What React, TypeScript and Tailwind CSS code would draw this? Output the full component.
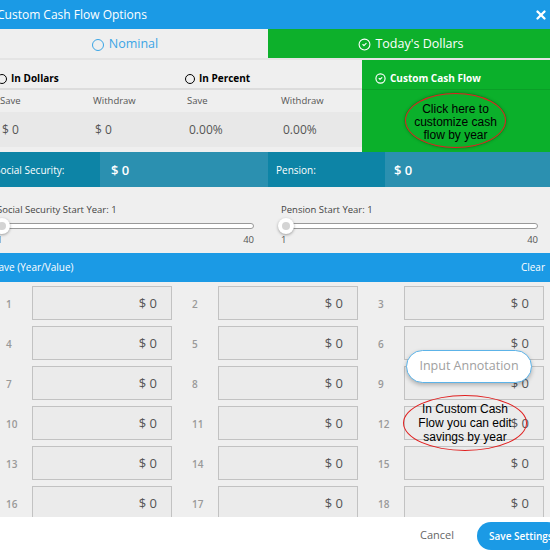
import { CircleCheck, X } from "lucide-react";

const ui = { fontFamily: '"Open Sans", "Noto Sans", sans-serif' };
const arial = { fontFamily: '"Liberation Sans", Arial, sans-serif' };

function Radio() {
	return <span className="inline-block w-[10px] h-[10px] rounded-full border border-black mr-[4px]" />;
}

function Slider({ label }: { label: string }) {
	return (
		<div className="w-[257px]">
			<div className="text-[9.5px] text-[#444] leading-none h-[13px]">{label}</div>
			<div className="relative h-[16px] flex items-center">
				<div className="w-full h-[6px] rounded-full bg-white border border-[#999]" />
				<div className="absolute left-[-3px] top-0 w-[16px] h-[16px] rounded-full bg-white shadow-[0_1px_3px_rgba(0,0,0,0.35)] flex items-center justify-center">
					<div className="w-[8px] h-[8px] rounded-full bg-[#d4d4d4]" />
				</div>
			</div>
			<div className="flex justify-between text-[9.5px] text-[#555] leading-none mt-[1px]">
				<span>1</span>
				<span>40</span>
			</div>
		</div>
	);
}

export default function App() {
	const cells = Array.from({ length: 18 }, (_, i) => i + 1);

	return (
		<div className="w-[550px] h-[550px] overflow-hidden relative bg-white" style={ui}>
			<div className="ml-[-8px] w-[562px] flex flex-col">
				{/* header */}
				<div className="h-[29px] bg-[#1b9ae5] flex items-center justify-between pl-[5px] pr-[6px]">
					<span className="text-white text-[12px]">Custom Cash Flow Options</span>
					<X size={14} strokeWidth={4} className="text-white" />
				</div>

				{/* tabs */}
				<div className="h-[31px] flex border-b-2 border-[#e4e4e4]">
					<div className="w-[276px] bg-[#efefef] flex items-center justify-center text-[12.5px] text-[#3aa5e6] pr-[10px] pt-[2px]">
						<span className="inline-block w-[12px] h-[12px] rounded-full border-[1.5px] border-[#3aa5e6] mr-[5px]" />
						Nominal
					</div>
					<div className="flex-1 bg-[#0db02b] flex items-center justify-center text-[12.5px] text-white pt-[2px]">
						<CircleCheck size={13} strokeWidth={2} className="mr-[4px]" />
						Today's Dollars
					</div>
				</div>

				{/* options */}
				<div className="h-[92px] flex">
					<div className="w-[370px] bg-[#efefef] flex flex-col">
						<div className="h-[30px] grid grid-cols-[186px_1fr] items-end pb-[2px] pl-[5px] text-[10px] font-bold text-black border-b-2 border-[#dcdcdc]">
							<span className="flex items-center"><Radio />In Dollars</span>
							<span className="flex items-center pl-[2px]"><Radio />In Percent</span>
						</div>
						<div className="h-[22px] grid grid-cols-[93px_94px_94px_1fr] items-center pl-[8px] text-[9.5px] text-[#555]">
							<span>Save</span>
							<span>Withdraw</span>
							<span>Save</span>
							<span>Withdraw</span>
						</div>
						<div className="h-[35px] bg-[#e8e8e8] grid grid-cols-[93px_94px_94px_1fr] items-center pl-[10px] text-[12px] text-[#555]">
							<span>$ 0</span>
							<span>$ 0</span>
							<span>0.00%</span>
							<span>0.00%</span>
						</div>
					</div>
					<div className="flex-1 bg-[#0bb02b] flex flex-col">
						<div className="h-[30px] flex items-end pb-[3px] pl-[13px] text-[10px] font-bold text-white border-b border-[#0a9f27]">
							<CircleCheck size={11} strokeWidth={2.5} className="mr-[4px] mb-[2px]" />
							Custom Cash Flow
						</div>
						<div className="flex-1 flex items-start pl-[43px] pt-[3px]">
							<div
								className="w-[101px] h-[55px] rounded-[50%] border-[1.5px] border-[#e02020] shadow-[0_0_3px_rgba(0,60,0,0.6)] flex items-center justify-center text-center text-[12px] leading-[13px] text-black pt-[3px]"
								style={arial}
							>
								Click here to<br />customize cash<br />flow by year
							</div>
						</div>
					</div>
				</div>

				{/* social security / pension */}
				<div className="h-[35px] flex text-white">
					<div className="w-[108px] bg-[#0d84a6] flex items-center pl-[3px] pt-[2px] text-[10px]">Social Security:</div>
					<div className="w-[168px] bg-[#2b90b0] flex items-center pl-[11px] pt-[2px] text-[13px] font-semibold">$ 0</div>
					<div className="w-[117px] bg-[#0d84a6] flex items-center pl-[8px] pt-[2px] text-[10px]">Pension:</div>
					<div className="flex-1 bg-[#2b90b0] flex items-center pl-[9px] pt-[2px] text-[13px] font-semibold">$ 0</div>
				</div>

				{/* sliders */}
				<div className="h-[66px] bg-[#efefef] flex pt-[18px]">
					<div className="w-[276px] pl-[5px]">
						<Slider label="Social Security Start Year: 1" />
					</div>
					<div className="flex-1 pl-[13px]">
						<Slider label="Pension Start Year: 1" />
					</div>
				</div>

				{/* save bar */}
				<div className="h-[29px] bg-[#1b9ae5] flex items-center justify-between pl-[1px] pr-[9px] text-white text-[10px]">
					<span>Save (Year/Value)</span>
					<span>Clear</span>
				</div>

				{/* year grid */}
				<div className="h-[235px] bg-[#efefef] overflow-hidden pl-[8px] pt-[4px]">
					<div className="grid grid-cols-[172px_172px_172px] gap-x-[14px] gap-y-[6px]">
						{cells.map((n) => (
							<div key={n} className="flex items-center h-[34px]">
								<span className="w-[32px] pl-[6px] text-[10px] font-semibold text-[#999] pt-[2px]">{n}</span>
								<div className="w-[140px] h-[34px] border border-[#c2c2c2] bg-[#ebebeb] flex items-center justify-end pr-[14px] pt-[1px] text-[13px] text-[#555]">
									$ 0
								</div>
							</div>
						))}
					</div>
				</div>

				{/* footer */}
				<div className="h-[33px] bg-white flex items-center justify-end">
					<span className="text-[11px] text-[#666] mr-[23px] mt-[4px]">Cancel</span>
					<div className="h-[28px] w-[84px] mt-[5px] mr-[-7px] rounded-full bg-[#1b9ae5] text-white text-[10px] font-semibold flex items-center pl-[12px]">
						Save Settings
					</div>
				</div>
			</div>

			{/* annotations */}
			<div className="absolute left-[406px] top-[350px] w-[126px] h-[33px] rounded-full bg-white border border-[#5cb3e8] shadow-[0_2px_4px_rgba(0,0,0,0.25)] flex items-center justify-center text-[12.5px] text-[#a0a0a0]">
				Input Annotation
			</div>
			<div
				className="absolute left-[403px] top-[395px] w-[124px] h-[56px] rounded-[50%] border-[1.5px] border-[#e02020] flex items-center justify-center text-center text-[12px] leading-[14px] text-black"
				style={arial}
			>
				In Custom Cash<br />Flow you can edit<br />savings by year
			</div>
		</div>
	);
}
